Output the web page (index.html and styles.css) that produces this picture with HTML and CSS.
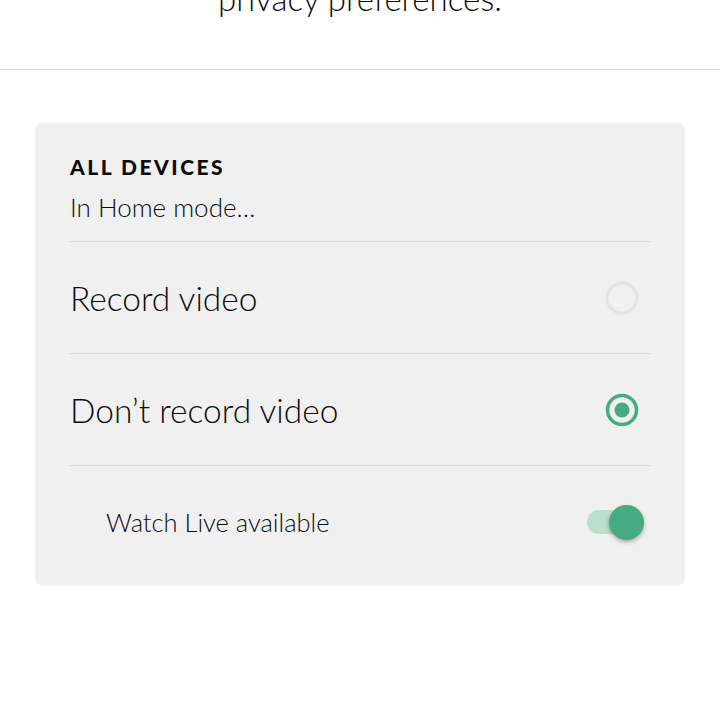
FILE: index.html
```html
<!DOCTYPE html>
<html lang="en">
<head>
  <meta charset="UTF-8">
  <title>Privacy settings</title>
  <meta name="viewport" content="width=device-width, initial-scale=1.0">
  <link rel="stylesheet" href="styles.css">
</head>
<body>

<header class="intro">
  <p class="intro-text">privacy preferences.</p>
</header>

<section class="card">
  <div class="card-head">
    <h2 class="card-title">ALL DEVICES</h2>
    <p class="card-sub">In Home mode…</p>
  </div>

  <div class="option">
    <span class="option-label">Record video</span>
    <svg class="radio" width="36" height="36" viewBox="0 0 36 36">
      <circle cx="18" cy="18" r="15" fill="none" stroke="#e3e3e3" stroke-width="3"/>
    </svg>
  </div>

  <div class="option">
    <span class="option-label">Don’t record video</span>
    <svg class="radio" width="36" height="36" viewBox="0 0 36 36">
      <circle cx="18" cy="18" r="14.5" fill="none" stroke="#46ab80" stroke-width="3.5"/>
      <circle cx="18" cy="18" r="7.5" fill="#46ab80"/>
    </svg>
  </div>

  <div class="option sub-option">
    <span class="sub-label">Watch Live available</span>
    <span class="toggle">
      <span class="toggle-knob"></span>
    </span>
  </div>
</section>

</body>
</html>
```

FILE: styles.css
```css
* {
  box-sizing: border-box;
  margin: 0;
  padding: 0;
}
body {
  font-family: 'Lato', 'Noto Sans', sans-serif;
  background: #fff;
  color: #0c0c0c;
  overflow: hidden;
}

.intro {
  display: flow-root;
  height: 70px;
  border-bottom: 1px solid #dcdcdc;
  text-align: center;
}
.intro-text {
  font-size: 33px;
  font-weight: 300;
  line-height: 40px;
  margin-top: -22px;
}

.card {
  margin: 53px 35px 0;
  background: #f0f0f0;
  border-radius: 7px;
  padding: 32px 35px 7px 35px;
}
.card-head {
  padding-bottom: 19px;
  border-bottom: 1px solid #d6d6d6;
}
.card-title {
  font-size: 21px;
  line-height: 24px;
  font-weight: 900;
  letter-spacing: 2.5px;
}
.card-sub {
  margin-top: 14px;
  font-size: 26px;
  line-height: 29px;
  font-weight: 300;
}

.option {
  height: 112px;
  display: flex;
  align-items: center;
  justify-content: space-between;
  border-bottom: 1px solid #d6d6d6;
}
.option-label {
  font-size: 33.5px;
  font-weight: 300;
}
.radio {
  margin-right: 10px;
}

.sub-option {
  margin-left: 36px;
  border-bottom: none;
}
.sub-label {
  font-size: 25.5px;
  font-weight: 300;
}

.toggle {
  width: 52px;
  height: 24px;
  border-radius: 12px;
  background: #bcdecd;
  display: flex;
  align-items: center;
  justify-content: flex-end;
  margin-right: 11px;
}
.toggle-knob {
  width: 35px;
  height: 35px;
  border-radius: 50%;
  background: #46ab80;
  box-shadow: 0 2px 4px rgba(0,0,0,0.3);
  margin-right: -5px;
}
```
